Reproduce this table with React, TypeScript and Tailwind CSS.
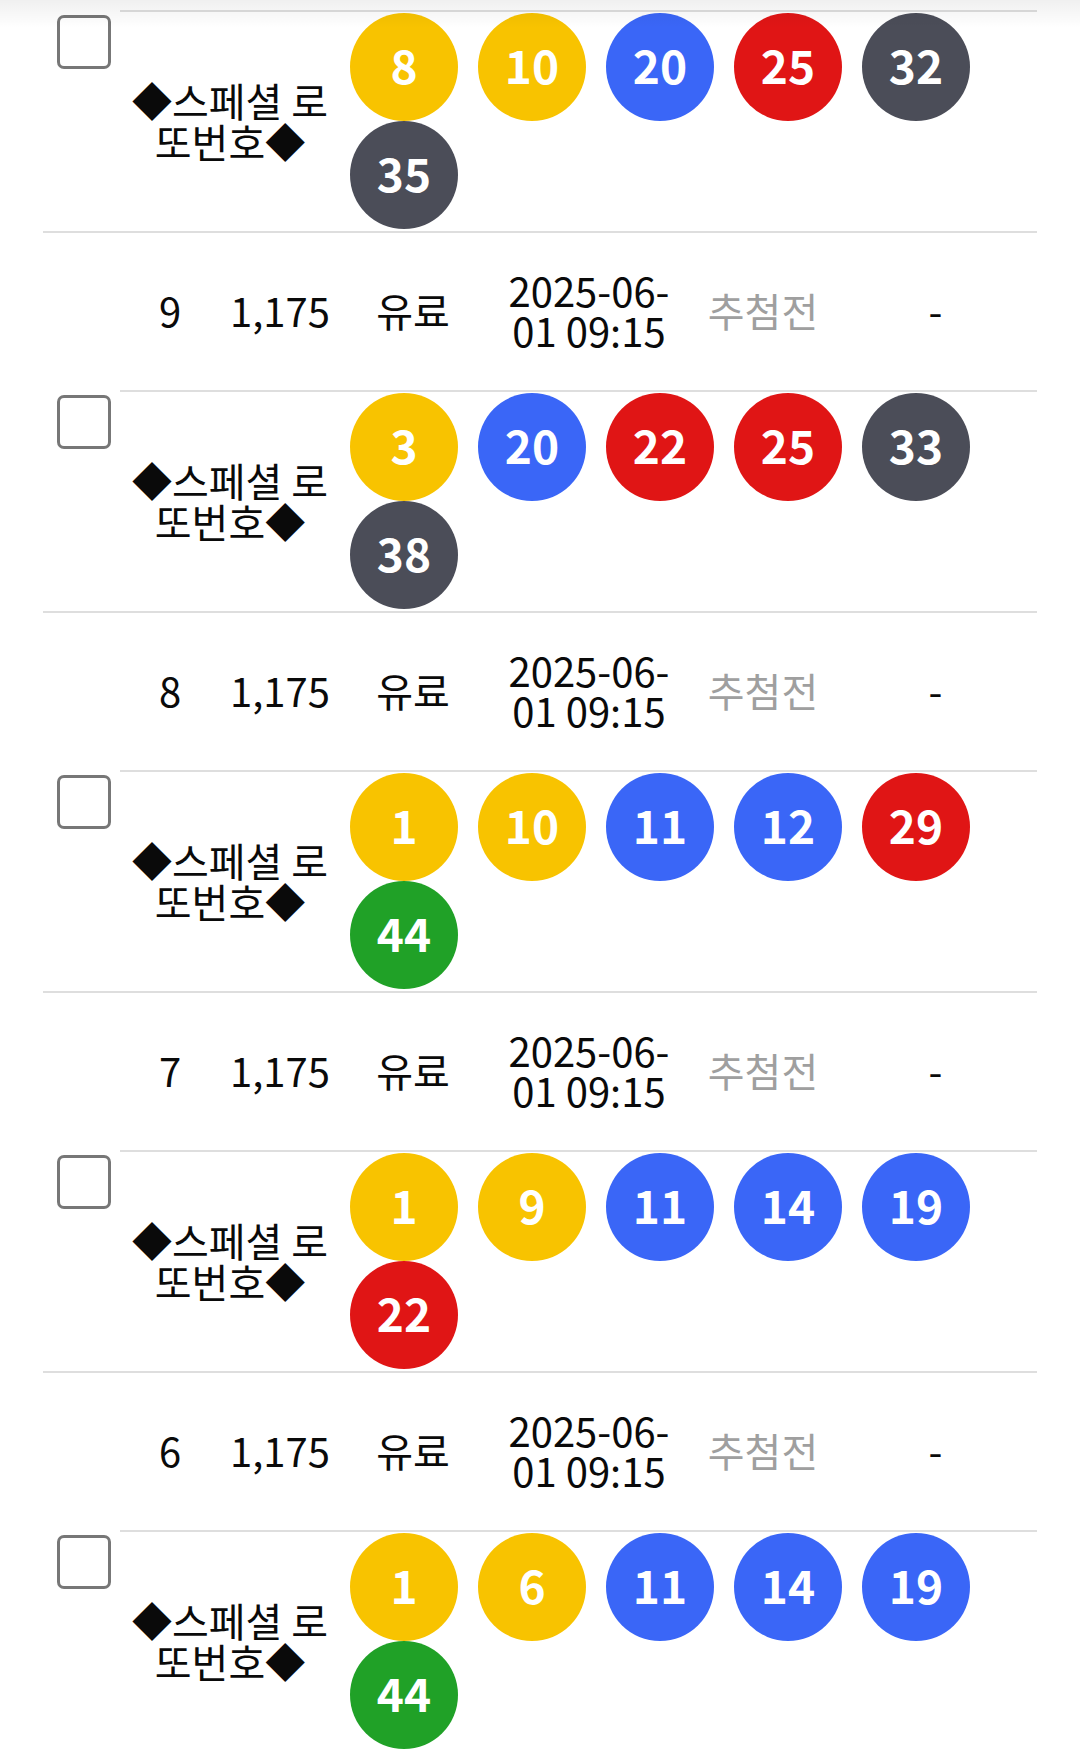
import React from 'react';

type Draw = {
  no: number;
  price: string;
  kind: string;
  date: [string, string];
  status: string;
  result: string;
  balls: number[];
};

const DRAWS: Draw[] = [
  { no: 10, price: '1,175', kind: '유료', date: ['2025-06-', '01 09:15'], status: '추첨전', result: '-', balls: [8, 10, 20, 25, 32, 35] },
  { no: 9, price: '1,175', kind: '유료', date: ['2025-06-', '01 09:15'], status: '추첨전', result: '-', balls: [3, 20, 22, 25, 33, 38] },
  { no: 8, price: '1,175', kind: '유료', date: ['2025-06-', '01 09:15'], status: '추첨전', result: '-', balls: [1, 10, 11, 12, 29, 44] },
  { no: 7, price: '1,175', kind: '유료', date: ['2025-06-', '01 09:15'], status: '추첨전', result: '-', balls: [1, 9, 11, 14, 19, 22] },
  { no: 6, price: '1,175', kind: '유료', date: ['2025-06-', '01 09:15'], status: '추첨전', result: '-', balls: [1, 6, 11, 14, 19, 44] },
];

// 번호 구간별 공 색상
function ballColor(n: number) {
  if (n <= 10) return 'bg-[#f8c300]';
  if (n <= 20) return 'bg-[#3a66f7]';
  if (n <= 30) return 'bg-[#e01515]';
  if (n <= 40) return 'bg-[#4b4d58]';
  return 'bg-[#20a127]';
}

function Ball({ n }: { n: number }) {
  return (
    <span
      className={`mx-[10px] flex h-[108px] w-[108px] items-center justify-center rounded-full pb-[6px] text-[46px] font-bold leading-[46px] text-white ${ballColor(n)}`}
    >
      {n}
    </span>
  );
}

function DrawRow({ draw, first }: { draw: Draw; first: boolean }) {
  return (
    <div className={`border-b-2 border-[#dedede] ${first ? '-mt-[147px]' : ''}`}>
      {/* 회차 정보 */}
      <div className="flex h-[157px] items-center pb-[4px] text-[40px] leading-[40px] text-[#0a0a0a]">
        <div className="w-[77px]" />
        <div className="w-[100px] text-center">{draw.no}</div>
        <div className="w-[120px] text-center">{draw.price}</div>
        <div className="w-[146px] text-center">{draw.kind}</div>
        <div className="w-[206px] text-center">
          <span className="block">{draw.date[0]}</span>
          <span className="block">{draw.date[1]}</span>
        </div>
        <div className="w-[142px] text-center text-[#9f9f9f]">{draw.status}</div>
        <div className="flex-1 text-center">{draw.result}</div>
      </div>

      {/* 선택 번호 */}
      <div className="flex h-[221px]">
        <div className="w-[77px] pl-[14px] pt-[5px]">
          <div className="h-[54px] w-[54px] rounded-[7px] border-[3px] border-[#777] bg-white" />
        </div>
        <div className="flex flex-1 border-t-2 border-[#dedede] pt-px">
          <div className="flex w-[220px] items-center justify-center pb-[3px] text-center text-[40px] leading-[41px] text-[#0a0a0a]">
            ◆스페셜 로또번호◆
          </div>
          <div className="flex flex-1 flex-wrap content-start">
            {draw.balls.map((n, i) => (
              <Ball key={i} n={n} />
            ))}
          </div>
        </div>
      </div>
    </div>
  );
}

export default function App() {
  return (
    <div className="relative min-h-screen overflow-hidden bg-white font-['Noto_Sans_CJK_KR',sans-serif]">
      <div className="pointer-events-none absolute inset-x-0 top-0 z-10 h-[28px] bg-gradient-to-b from-black/[0.06] to-transparent" />
      <div className="px-[43px]">
        {DRAWS.map((d, i) => (
          <DrawRow key={d.no} draw={d} first={i === 0} />
        ))}
      </div>
    </div>
  );
}
